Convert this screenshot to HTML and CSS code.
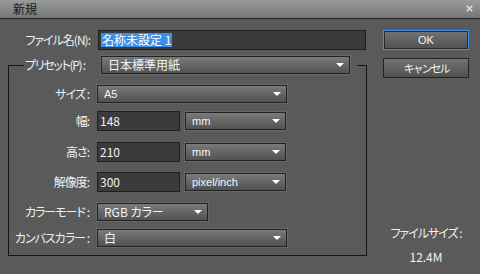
FILE: index.html
```html
<!DOCTYPE html>
<html lang="ja">
<head>
<meta charset="utf-8">
<title>新規</title>
<link rel="stylesheet" href="styles.css">
</head>
<body>
<div class="dialog">
  <div class="titlebar">
    <span class="title">新規</span>
    <svg class="close" viewBox="0 0 7 7" width="7" height="7"><path d="M0.8 0.8 L6.2 6.2 M6.2 0.8 L0.8 6.2" stroke="#d6d6d6" stroke-width="1.8" fill="none"/></svg>
  </div>
  <div class="content">
    <div class="left">
      <div class="name-row">
        <span class="name-label">ファイル名(N):</span>
        <div class="textbox name-box"><span class="sel">名称未設定 1</span></div>
      </div>
      <fieldset class="preset">
        <legend class="legend">
          <span class="legend-label">プリセット(P) :</span>
          <div class="dropdown preset-dd"><span>日本標準用紙</span><i class="arrow"></i></div>
        </legend>
        <div class="row r-size">
          <span class="lbl">サイズ :</span>
          <div class="dropdown w-wide latin"><span>A5</span><i class="arrow"></i></div>
        </div>
        <div class="row r-width">
          <span class="lbl">幅:</span>
          <div class="textbox num"><span>148</span></div>
          <div class="dropdown unit latin"><span>mm</span><i class="arrow"></i></div>
        </div>
        <div class="row r-height">
          <span class="lbl">高さ:</span>
          <div class="textbox num"><span>210</span></div>
          <div class="dropdown unit latin"><span>mm</span><i class="arrow"></i></div>
        </div>
        <div class="row r-res">
          <span class="lbl">解像度:</span>
          <div class="textbox num"><span>300</span></div>
          <div class="dropdown unit latin"><span>pixel/inch</span><i class="arrow"></i></div>
        </div>
        <div class="row r-mode">
          <span class="lbl">カラーモード :</span>
          <div class="dropdown w-mode"><span>RGB カラー</span><i class="arrow"></i></div>
        </div>
        <div class="row r-canvas">
          <span class="lbl">カンバスカラー :</span>
          <div class="dropdown w-wide"><span>白</span><i class="arrow"></i></div>
        </div>
      </fieldset>
    </div>
    <div class="right">
      <button class="btn ok">OK</button>
      <button class="btn cancel">キャンセル</button>
      <div class="filesize">
        <div class="fs-label">ファイルサイズ :</div>
        <div class="fs-value">12.4M</div>
      </div>
    </div>
  </div>
</div>
</body>
</html>
```

FILE: styles.css
```css
* { box-sizing: border-box; }
html, body { margin: 0; padding: 0; }
body {
  width: 480px;
  height: 274px;
  overflow: hidden;
  background: #5a5a5a;
  font-family: "Noto Sans CJK JP", "Noto Sans", sans-serif;
  font-size: 12px;
  line-height: 14px;
  color: #f0f0f0;
  font-feature-settings: "palt";
}
.titlebar {
  height: 19px;
  display: flex;
  align-items: center;
  justify-content: space-between;
  padding: 0 7px 1px 13px;
  background: linear-gradient(#9a9a9a, #767676);
  border-bottom: 1px solid #262626;
}
.title { color: #161616; font-size: 12px; }
.close { display: block; margin-top: -1px; }
.content { display: flex; padding-top: 11px; }
.left { width: 367px; display: flex; flex-direction: column; }
.name-row { display: flex; align-items: center; height: 20px; }
.name-label { width: 90px; text-align: right; margin-right: 8px; white-space: nowrap; letter-spacing: -1px; }
.textbox {
  height: 20px;
  background: #3b3b3b;
  border: 1px solid #1f1f1f;
  display: flex;
  align-items: center;
  padding-left: 2px;
  color: #f2f2f2;
}
.name-box { width: 268px; }
.sel { background: #3d8fe6; color: #ffffff; padding: 0 1px; }
.preset {
  margin: 6px 0 0 8px;
  padding: 11px 0 8px 0;
  border: 1px solid #161616;
  width: 359px;
  min-width: 0;
}
.legend {
  margin-left: 15px;
  padding: 0 7px 0 1px;
  display: flex;
  align-items: center;
}
.legend-label { width: 76px; white-space: nowrap; letter-spacing: -1.3px; }
.dropdown {
  height: 18px;
  display: flex;
  align-items: center;
  justify-content: space-between;
  padding: 0 5px 0 6px;
  background: linear-gradient(#7a7a7a, #525252);
  border: 1px solid #222;
  box-shadow: 0 0 0 1px #676767;
  color: #f4f4f4;
  white-space: nowrap;
}
.latin { font-family: "Liberation Sans", "Noto Sans", sans-serif; font-size: 11px; }
.arrow {
  display: block;
  width: 0;
  height: 0;
  border-left: 4px solid transparent;
  border-right: 4px solid transparent;
  border-top: 4px solid #ffffff;
}
.preset-dd { width: 249px; }
.row { display: flex; align-items: center; }
.lbl { width: 80px; margin-right: 8px; text-align: right; white-space: nowrap; letter-spacing: -1px; }
.w-wide { width: 190px; }
.w-mode { width: 111px; }
.num { width: 83px; }
.unit { width: 101px; margin-left: 5px; }
.r-size { height: 18px; }
.r-width { height: 20px; margin-top: 8px; }
.r-height { height: 20px; margin-top: 11px; }
.r-res { height: 20px; margin-top: 10px; }
.r-mode { height: 18px; margin-top: 11px; }
.r-canvas { height: 18px; margin-top: 8px; }
.right { margin-left: 16px; width: 86px; display: flex; flex-direction: column; }
.btn {
  height: 20px;
  width: 86px;
  padding: 0;
  font-family: "Liberation Sans", "Noto Sans CJK JP", sans-serif;
  font-size: 11px;
  color: #f4f4f4;
  background: linear-gradient(#737373, #505050);
  border: 1px solid #222;
}
.ok { border-color: #3d8fe8; box-shadow: inset 0 0 0 1px #2a2a2a; }
.cancel { margin-top: 8px; font-family: "Noto Sans CJK JP", sans-serif; letter-spacing: -2px; }
.filesize { margin-top: 148px; text-align: center; }
.fs-label { letter-spacing: -1px; }
.fs-value { margin-top: 10px; }
```
